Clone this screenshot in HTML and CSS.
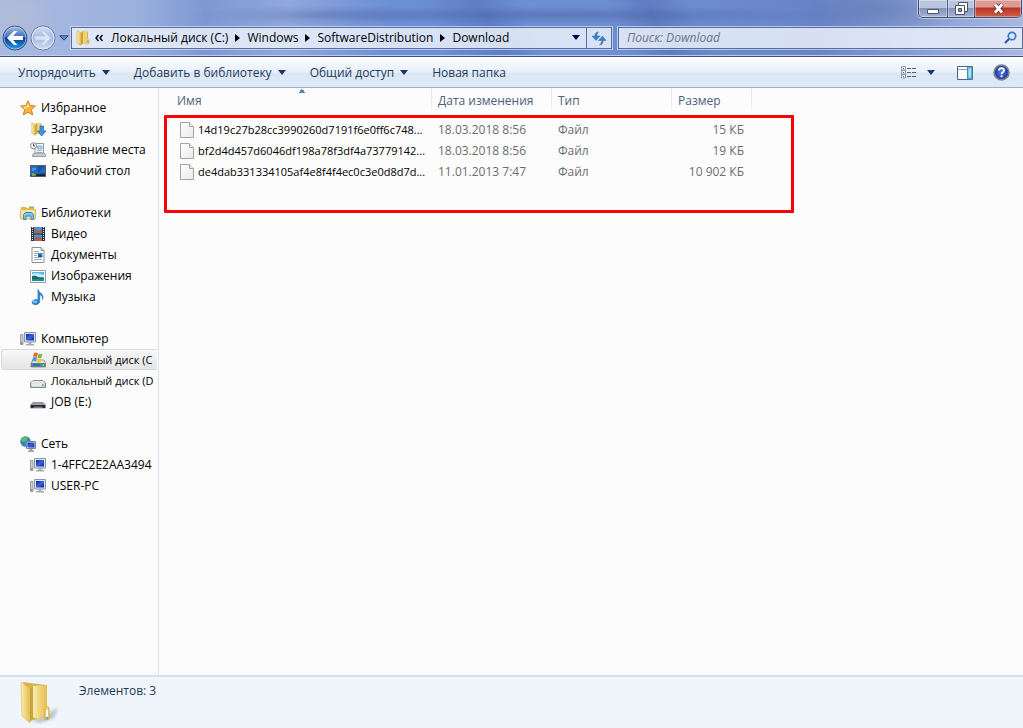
FILE: index.html
```html
<!DOCTYPE html>
<html lang="ru">
<head>
<meta charset="utf-8">
<title>Download</title>
<link rel="stylesheet" href="styles.css">
</head>
<body>
<svg class="defs" aria-hidden="true">
  <defs>
    <linearGradient id="gold" x1="0" x2="1"><stop offset="0" stop-color="#fbeeb0"/><stop offset="1" stop-color="#e5bd50"/></linearGradient>
    <linearGradient id="orb" x1="0" y1="0" x2="0" y2="1"><stop offset="0" stop-color="#a9c3e8"/><stop offset=".45" stop-color="#3f6fbe"/><stop offset=".5" stop-color="#0b3a94"/><stop offset="1" stop-color="#1fa5f0"/></linearGradient>
    <linearGradient id="orb2" x1="0" y1="0" x2="0" y2="1"><stop offset="0" stop-color="#d3ddf2"/><stop offset=".5" stop-color="#a9bbe2"/><stop offset="1" stop-color="#d0dcf3"/></linearGradient>
    <linearGradient id="screen" x1="0" y1="0" x2="1" y2="1"><stop offset="0" stop-color="#0a1fa0"/><stop offset=".5" stop-color="#3a62e0"/><stop offset="1" stop-color="#0c2290"/></linearGradient>
    <linearGradient id="sheet" x1="0" y1="0" x2="1" y2="1"><stop offset="0" stop-color="#ffffff"/><stop offset="1" stop-color="#e9e9e9"/></linearGradient>
    <linearGradient id="metal" x1="0" y1="0" x2="0" y2="1"><stop offset="0" stop-color="#f4f4f4"/><stop offset="1" stop-color="#b4b8bb"/></linearGradient>
    <radialGradient id="help"><stop offset="0" stop-color="#5b8bec"/><stop offset="1" stop-color="#0b2a9a"/></radialGradient>
    <symbol id="pc" viewBox="0 0 16 16">
      <path d="M.5 3.500h2.500v10H.5z" fill="#c9ced3" stroke="#888f96" stroke-width=".8"/><path d="M1 11h1.500v2H1z" fill="#55b848"/>
      <path d="M4.500 1.500h11v9.500h-11z" fill="#dfe3ea" stroke="#8c949f"/><path d="M6 3h8v6.500H6z" fill="url(#screen)"/>
      <path d="M8.500 11h3v2h2.500v1.500H6V13h2.500z" fill="#a5abb2"/>
    </symbol>
    <symbol id="file" viewBox="0 0 14 16">
      <path d="M.5.5h9l4 4v11H.5z" fill="url(#sheet)" stroke="#a3a3a3"/><path d="M9.500.5v4h4" fill="#f2f2f2" stroke="#a3a3a3"/>
    </symbol>
    <symbol id="folder" viewBox="0 0 16 16">
      <path d="M7 1l6 .5V13l-7 1z" fill="#dcb343"/><path d="M8 1l4-.5V13l-4 1z" fill="#efd274"/><path d="M2 .8l4 2V15.200L2 13z" fill="url(#gold)" stroke="#d4af4c" stroke-width=".6"/><path d="M6 2.800l2-1V13l-2 2z" fill="#cda23a"/><path d="M11.500 9.500q2-2 2.500 0v4l-2.500 1z" fill="#f2d878" stroke="#d4ae44" stroke-width=".5"/><path d="M13 10v3" stroke="#5aa6e0"/>
    </symbol>
  </defs>
</svg>
<div class="window">
  <header class="frame">
    <div class="caption">
      <button class="cap" aria-label="Свернуть"><svg width="14" height="7" viewBox="0 0 14 7"><path d="M1.500 1.500h11v4h-11z" fill="#fff" stroke="#4a5468"/></svg></button>
      <button class="cap cap-max" aria-label="Восстановить"><svg width="13" height="13" viewBox="0 0 13 13"><path d="M3.500.5h9v9h-9z" fill="#fff" stroke="#4a5468"/><path d="M.5 3.500h9v9h-9z" fill="#fff" stroke="#4a5468"/><path d="M3.500 6.500h3v3h-3z" fill="#8191b0" stroke="#4a5468"/></svg></button>
      <button class="cap cap-close" aria-label="Закрыть"><svg width="13" height="11" viewBox="0 0 13 11"><path d="M3 1.500l7 8M10 1.500l-7 8" stroke="#5b3540" stroke-width="4.500"/><path d="M3 1.500l7 8M10 1.500l-7 8" stroke="#fff" stroke-width="2.800"/></svg></button>
    </div>
    <div class="navrow">
      <div class="travel">
        <button aria-label="Назад"><svg width="26" height="26" viewBox="0 0 26 26"><circle cx="13" cy="13" r="12" fill="url(#orb)" stroke="#3c4d77"/><circle cx="13" cy="13" r="11" fill="none" stroke="#b5cdf0" stroke-opacity=".7"/><path d="M5 13l7-7h3.500l-4.500 5H21v4H11l4.500 5H12z" fill="#fff"/></svg></button>
        <button aria-label="Вперёд"><svg width="26" height="26" viewBox="0 0 26 26"><circle cx="13" cy="13" r="12" fill="url(#orb2)" stroke="#68799c"/><circle cx="13" cy="13" r="11" fill="none" stroke="#dfe8f8"/><path d="M21 13l-7-7h-3.500l4.500 5H5v4h10l-4.500 5H14z" fill="#d9e3f5" stroke="#b3c2e2" stroke-width=".6"/></svg></button>
        <button aria-label="Журнал"><svg width="10" height="6" viewBox="0 0 10 6"><path d="M.8.800h8.400L5 5.200z" fill="#5292d4" stroke="#2c477c"/></svg></button>
      </div>
      <div class="address">
        <svg class="ic" width="16" height="16"><use href="#folder"/></svg>
        <button class="laquo" aria-label="Предыдущие папки"><svg width="8" height="8" viewBox="0 0 8 8"><path d="M3.500 1L1 4l2.500 3M7.500 1L5 4l2.500 3" fill="none" stroke="#000" stroke-width="1.400"/></svg></button>
        <a href="#">Локальный диск (C:)</a><i class="sep"></i><a href="#">Windows</a><i class="sep"></i><a href="#">SoftwareDistribution</a><i class="sep"></i><a href="#">Download</a>
        <button class="drop" aria-label="Предыдущие расположения"><i class="tri"></i></button>
        <button class="refresh" aria-label="Обновить"><svg width="16" height="16" viewBox="0 0 16 16"><path d="M7.500 2C4.500 2 4 4 4 6H1l4 4.500L9 6H6c0-2 0-3 1.500-4z" fill="#3c7fce" stroke="#2a5ea8" stroke-width=".4"/><path d="M8.500 15c3 0 3.500-2 3.500-4.500h3L11.500 6l-4 4.500h3c0 2.500-.5 3.500-2 4.500z" fill="#3c7fce" stroke="#2a5ea8" stroke-width=".4"/></svg></button>
      </div>
      <label class="search"><input type="text" aria-label="Поиск" placeholder="Поиск: Download"><svg width="13" height="13" viewBox="0 0 13 13"><circle cx="8" cy="5" r="3.700" fill="#d8eafc" stroke="#3777c4" stroke-width="1.700"/><path d="M5 8l-4 4" stroke="#2c5ca5" stroke-width="2.200"/></svg></label>
    </div>
  </header>

  <div class="toolbar">
    <button>Упорядочить<i class="tri"></i></button>
    <button>Добавить в библиотеку<i class="tri"></i></button>
    <button>Общий доступ<i class="tri"></i></button>
    <button>Новая папка</button>
    <div class="tools">
      <button aria-label="Вид"><svg width="16" height="13" viewBox="0 0 16 13"><path d="M.5.5h4v3.500h-4zM.5 4.500h4V8h-4zM.5 8.500h4V12h-4z" fill="#fff" stroke="#8a95a5"/><path d="M2 2h1v1H2zM2 10h1v1H2z" fill="#456"/><path d="M2 6h1v1H2z" fill="#d22"/><path d="M6 2.500h4m1 0h4M6 6.500h4m1 0h4M6 10.500h4m1 0h4" stroke="#4e6384"/></svg></button>
      <button class="viewdrop" aria-label="Дополнительно"><i class="tri"></i></button>
      <button aria-label="Область просмотра"><svg width="16" height="14" viewBox="0 0 16 14"><path d="M.5.5h15v13H.5z" fill="#fff" stroke="#4b6289"/><path d="M1 3.500h9" stroke="#8aa0c4"/><path d="M10.500 1h4.500v12h-4.500z" fill="#75cbe2" stroke="#4f88ac"/><path d="M12 3h2v8h-2z" fill="#a7e6ef"/></svg></button>
      <button aria-label="Справка"><svg width="17" height="17" viewBox="0 0 17 17"><circle cx="8.500" cy="8.500" r="7.400" fill="url(#help)" stroke="#7d828c" stroke-width="1.800"/><path d="M6 6.500c0-3 5-3 5 0 0 1.600-2.300 1.700-2.300 3.500" fill="none" stroke="#fff" stroke-width="1.800"/><circle cx="8.600" cy="12.300" r="1.100" fill="#fff"/></svg></button>
    </div>
  </div>

  <div class="body">
    <nav class="side">
      <section>
        <a class="root" href="#"><svg width="16" height="16" viewBox="0 0 16 16"><path d="M8 .8l2.200 4.800 5.200.4-4 3.600 1.300 5.400L8 12.200 3.300 15l1.300-5.400-4-3.600 5.200-.4z" fill="#fbb33b" stroke="#d97e22"/><path d="M8 3l1.300 3.500L5 9l-2-2.200 3.500-.5z" fill="#fedd8a"/></svg>Избранное</a>
        <a href="#"><svg width="16" height="16" viewBox="0 0 16 16"><use href="#folder" width="14" height="16"/><path d="M10 5h3.500v5H16l-4.300 5L7.500 10H10z" fill="#3b96e4" stroke="#1e64ac" stroke-width=".7"/></svg>Загрузки</a>
        <a href="#"><svg width="16" height="16" viewBox="0 0 16 16"><path d="M5 1.500h8.500V12H5z" fill="#f5f8fb" stroke="#8d99a3"/><path d="M7.500 4h4.500v3H7.500zM7 8.500h5M7 10.500h5" fill="#a7d4f0" stroke="#7ba9c8" stroke-width=".8"/><path d="M3 12l2-1h9l1.500 1.500v2h-13z" fill="#c7ccd0" stroke="#868d92" stroke-width=".8"/><circle cx="3.500" cy="3.800" r="3" fill="#f1f4f6" stroke="#848c92"/><path d="M3.500 2v2H5" fill="none" stroke="#556"/></svg>Недавние места</a>
        <a href="#"><svg width="16" height="16" viewBox="0 0 16 16"><path d="M.5 2.500h15v11H.5z" fill="#1b4a8c" stroke="#4d5b70"/><path d="M1 3h14v7L1 11z" fill="#276bc0"/><path d="M7 3h8L8 10z" fill="#1654a8"/><path d="M1 11.500h14V13H1z" fill="#14233a"/><circle cx="3" cy="11.500" r="1.600" fill="#5db85a"/><path d="M4 12h2" stroke="#f4bb35"/><path d="M3 5v3M5 5v2" stroke="#80aeea"/></svg>Рабочий стол</a>
      </section>
      <section>
        <a class="root" href="#"><svg width="16" height="16" viewBox="0 0 16 16"><path d="M1 2h5l1 1h7v11H1z" fill="#e2b850"/><path d="M.5 4.500h15V14H.5z" fill="#f7e4a0" stroke="#dbb95e"/><path d="M3.500 14.500V9.500l2-2h6l2 2v5H11v-3.500H6V14.500z" fill="#7fc2ea" stroke="#3b86bf"/><path d="M9 1.500h5v1.500H9z" fill="#8cba60"/></svg>Библиотеки</a>
        <a href="#"><svg width="16" height="16" viewBox="0 0 16 16"><path d="M1 1h14v14H1z" fill="#273340"/><path d="M4 1h8v14H4z" fill="#4a94d8"/><path d="M4 2l4 3 4-2v3L9 7H6L4 6zM4 15l1-3 3-2 4 3v2z" fill="#b0604a"/><path d="M4 8h8" stroke="#182634"/><path d="M2.500 1v14M13.500 1v14" stroke="#d8e7e4" stroke-dasharray="1 1"/></svg>Видео</a>
        <a href="#"><svg width="16" height="16" viewBox="0 0 16 16"><path d="M2 .5h9l3 3v12H2z" fill="#fff" stroke="#8a9299"/><path d="M11 .5v3h3" fill="#e1e5e9" stroke="#8a9299"/><path d="M4 4.500h5M4 6.500h4M4 8.500h3M4 10.500h8M4 12.500h8" stroke="#9aacb8"/><path d="M8 6h4.500v4H8z" fill="#368acb"/><path d="M8 9l2-2 2.500 3H8z" fill="#195592"/></svg>Документы</a>
        <a href="#"><svg width="16" height="16" viewBox="0 0 16 16"><path d="M.5 2.500h15v12H.5z" fill="#fff" stroke="#929fab"/><path d="M2 4h12v9H2z" fill="#5ab9ef"/><path d="M2 6q4-2 12 1v2H2z" fill="#c5edfa"/><path d="M2 8q4-1 6 1l6 1v1H2z" fill="#216c4b"/><path d="M2 11h12v2H2z" fill="#1e87b2"/></svg>Изображения</a>
        <a href="#"><svg width="16" height="16" viewBox="0 0 16 16"><path d="M8 .5c1 3.500 6.500 4.500 4.500 10 .3-3-1-4.500-2.800-5v7c0 2.500-3 3.500-5.500 3s-3-3.500 0-4.500c1.500-.6 3-.5 3.800 0z" fill="#2c87dc" stroke="#1c65b2" stroke-width=".6"/><ellipse cx="4.800" cy="12.800" rx="2.300" ry="1.300" fill="#7cc0f5"/></svg>Музыка</a>
      </section>
      <section>
        <a class="root" href="#"><svg width="16" height="16"><use href="#pc"/></svg>Компьютер</a>
        <a class="drive current" href="#" title="Локальный диск (C:)"><svg width="16" height="16" viewBox="0 0 16 16"><path d="M1 11l2-3h11l1.500 3v4H1z" fill="url(#metal)" stroke="#777f84" stroke-width=".7"/><path d="M1 11h14.500v4H1z" fill="#62818a"/><path d="M3 12h7v2H3z" fill="#2d76a8"/><path d="M12.500 12H14v2h-1.500z" fill="#6ef052"/><path d="M4 1q2-1 4 .3L7 5Q5 4 3 5z" fill="#ec6533"/><path d="M8.500 1.500q2 1 4 0l-1 4q-2 1-4 0z" fill="#7cb93c"/><path d="M3 5.500q2-1 4 0L6 9.500q-2-1-4 0z" fill="#4897df"/><path d="M7.500 6q2 1 4 0l-1 4q-2 1-4 0z" fill="#fac540"/></svg>Локальный диск (C</a>
        <a class="drive" href="#" title="Локальный диск (D:)"><svg width="16" height="16" viewBox="0 0 16 16"><path d="M.5 10L3 7.500h10l2.500 2.500v4.500H.5z" fill="url(#metal)" stroke="#858b8f"/><path d="M2 10.500h12v3H2z" fill="#e9eced"/><path d="M12 11h1.500v2H12z" fill="#4dcb3b"/></svg>Локальный диск (D</a>
        <a href="#"><svg width="16" height="16" viewBox="0 0 16 16"><path d="M.5 11L3 8.500h10l2.500 2.500v3H.5z" fill="#9ca0a4" stroke="#73777b" stroke-width=".7"/><path d="M1 11h14v3H1z" fill="#292c31"/><path d="M3 14l1.500-1.500h7L13 14z" fill="#777d83"/></svg>JOB (E:)</a>
      </section>
      <section>
        <a class="root" href="#"><svg width="16" height="16" viewBox="0 0 16 16"><circle cx="5.500" cy="5.500" r="5.200" fill="#2c83cb"/><path d="M2 2q4-3 6 0L6 5 3 6 1 4zM5 7l4 0-2 3.500z" fill="#61bf59"/><path d="M6.500 5.500h9v7h-9z" fill="#dce2eb" stroke="#7c8698"/><path d="M7.500 6.500h7v5h-7z" fill="url(#screen)"/><path d="M9.500 13h3v1.500H14V16H8v-1.500h1.500z" fill="#9aa3ad"/></svg>Сеть</a>
        <a href="#"><svg width="16" height="16"><use href="#pc"/></svg>1-4FFC2E2AA3494</a>
        <a href="#"><svg width="16" height="16"><use href="#pc"/></svg>USER-PC</a>
      </section>
    </nav>
    <main class="content">
      <table>
        <colgroup><col class="c-name"><col class="c-mid"><col class="c-mid"><col class="c-size"></colgroup>
        <thead><tr><th class="sorted"><button>Имя</button></th><th><button>Дата изменения</button></th><th><button>Тип</button></th><th><button>Размер</button></th></tr></thead>
        <tbody>
          <tr><td><span class="name"><svg width="14" height="16"><use href="#file"/></svg>14d19c27b28cc3990260d7191f6e0ff6c748...</span></td><td>18.03.2018 8:56</td><td>Файл</td><td>15 КБ</td></tr>
          <tr><td><span class="name"><svg width="14" height="16"><use href="#file"/></svg>bf2d4d457d6046df198a78f3df4a73779142...</span></td><td>18.03.2018 8:56</td><td>Файл</td><td>19 КБ</td></tr>
          <tr><td><span class="name"><svg width="14" height="16"><use href="#file"/></svg>de4dab331334105af4e8f4f4ec0c3e0d8d7d...</span></td><td>11.01.2013 7:47</td><td>Файл</td><td>10 902 КБ</td></tr>
        </tbody>
      </table>
      <div class="marker"></div>
    </main>
  </div>

  <footer class="details">
    <svg width="40" height="44" viewBox="0 0 40 44"><defs><filter id="soft"><feGaussianBlur stdDeviation="1.500"/></filter></defs><path d="M12 40l26-13-4 10-14 5z" fill="#9da5b4" opacity=".6" filter="url(#soft)"/><path d="M3 1l23 3v32l-16 4z" fill="#d5b450"/><path d="M13 5l14-1v31l-9 3-6-2z" fill="url(#gold)"/><path d="M1 1l9 7v34l-8-7z" fill="url(#gold)" stroke="#e0c468" stroke-width=".7"/><path d="M10 8l3-2v31l-3 4z" fill="#c6a441"/><path d="M25 28q3-4 4-1v11l-4 1z" fill="#f2d878" stroke="#d4ae44"/><path d="M27 29v7" stroke="#fff" stroke-width="2"/><path d="M27 36v2" stroke="#5aa6e0" stroke-width="2"/></svg>
    <p>Элементов: 3</p>
  </footer>
</div>
</body>
</html>
```
FILE: styles.css
```css
* { box-sizing: border-box; }
body { margin: 0; font: 12px/16px "Open Sans", "Noto Sans", sans-serif; color: #000; }
button { font: inherit; color: inherit; background: none; border: 0; padding: 0; display: flex; align-items: center; }
a { color: inherit; text-decoration: none; }
svg { flex: none; display: block; }
.defs { position: absolute; width: 0; height: 0; }
.window { min-height: 100vh; display: flex; flex-direction: column; background: #fcfcfc; }

.frame {
  position: relative;
  padding: 25px 0 6px;
  border-bottom: 1px solid #3f5078;
  background:
    radial-gradient(ellipse 40px 26px at 16px 16px, rgba(190, 190, 205, .5), transparent),
    radial-gradient(ellipse 140px 10px at 330px 15px, rgba(70, 90, 150, .3), transparent),
    radial-gradient(ellipse 300px 9px at 560px 15px, rgba(60, 80, 140, .35), transparent),
    radial-gradient(ellipse 90px 24px at 880px 10px, rgba(70, 95, 150, .3), transparent),
    linear-gradient(65deg, transparent 42%, rgba(50, 75, 150, .25) 48%, transparent 52%, transparent 60%, rgba(50, 75, 150, .25) 64%, transparent 68%),
    linear-gradient(90deg, #a9bae0 0, #9cb1de 13%, #7d98d4 20%, #90a8dc 28%, #6d8fd6 38%, #6e8ed2 60%, #6985c8 80%, #9caedb 96%, #a8b8df);
  box-shadow: inset 0 -1px #b9cdf1;
}
.caption {
  position: absolute; top: 0; right: 1px; display: flex; height: 18px;
  border: 1px solid #414e70; border-top: 0; border-radius: 0 0 5px 5px; overflow: hidden;
  box-shadow: 0 0 0 1px rgba(220, 230, 250, .6);
}
.cap { width: 28px; justify-content: center; background: linear-gradient(#b9c5df 45%, #8294bb 50%, #a5b5d6); box-shadow: inset 0 0 0 1px rgba(255, 255, 255, .35); }
.cap:first-child { padding-top: 5px; }
.cap-max { width: 27px; border-left: 1px solid #4c5a7c; }
.cap-close { width: 47px; border-left: 1px solid #4c5a7c; background: linear-gradient(#dc9c94 40%, #b93324 48%, #d0604a); }

.navrow { display: flex; align-items: center; height: 25px; }
.travel { display: flex; align-items: center; gap: 2px; width: 71px; padding-left: 2px; }
.travel button:last-child { margin-left: 1px; }
.address, .search {
  display: flex; align-items: center; height: 22px; min-width: 0;
  border: 1px solid #5b6e9b; background: rgba(236, 242, 252, .84); box-shadow: 0 0 0 1px rgba(210, 222, 246, .75);
}
.address { flex: 0 0 541px; padding-left: 3px; white-space: nowrap; }
.laquo { margin: 0 8px 0 4px; }
.sep { border: 4px solid transparent; border-left: 5px solid #000; border-right: 0; margin: 0 7px; }
.tri { border: 4px solid transparent; border-top: 5px solid #1e395b; border-bottom: 0; }
.drop { margin-left: auto; padding: 0 6px; }
.drop .tri { border-top-color: #000060; }
.refresh { align-self: stretch; width: 25px; justify-content: center; border-left: 1px solid #5b6e9b; }
.search { flex: 1; margin-left: 6px; padding: 0 5px 0 8px; }
.search input { flex: 1; min-width: 0; font: italic 12px/16px "Open Sans", sans-serif; border: 0; padding: 0; background: none; outline: 0; }
.search input::placeholder { color: #70757f; opacity: 1; }

.toolbar {
  display: flex; align-items: center; height: 31px; padding: 0 13px 0 18px; gap: 24px; color: #1e395b;
  border-top: 1px solid #fff; border-bottom: 1px solid #a0afc8;
  background: linear-gradient(#fafcff, #e8f0fa 48%, #dce6f4 52%, #dee9f8);
}
.toolbar .tri { margin-left: 6px; }
.tools { display: flex; align-items: center; margin-left: auto; gap: 20px; }
.tools .viewdrop { margin: 0 2px 0 -16px; }

.body { flex: 1; display: flex; }
.side { flex: 0 0 159px; padding: 9px 0; border-right: 1px solid #d6e5f5; }
.side section { margin-bottom: 21px; }
.side a { display: flex; align-items: center; gap: 5px; height: 21px; padding-left: 29px; margin: 0 1px; white-space: nowrap; }
.side a.root { padding-left: 19px; }
.side a.drive { font-size: 11px; }
.side a.current { border: 1px solid #d9d9d9; border-right: 0; border-radius: 3px 0 0 3px; padding-left: 28px; background: linear-gradient(#f8f8f8, #e5e5e5); }

.content { flex: 1; position: relative; padding-left: 12px; }
table { table-layout: fixed; width: 581px; border-collapse: collapse; }
.c-name { width: 261px; }
.c-mid { width: 120px; }
.c-size { width: 80px; }
th { height: 31px; padding: 0 0 5px 6px; color: #4c607a; font-weight: 400; text-align: left; background: linear-gradient(#dde7f3, #e8eef6 70%, #fcfcfc) right top / 1px 24px no-repeat; }
th.sorted { background: linear-gradient(#dde7f3, #e8eef6 70%, #fcfcfc) right top / 1px 24px no-repeat, conic-gradient(from 135deg at 50% 0, #5a86b4 90deg, transparent 0) center 1px / 8px 4px no-repeat; }
td { height: 21px; padding: 0 0 0 6px; color: #6d6d6d; white-space: nowrap; }
td:first-child { padding-left: 9px; color: #000; font-size: 11px; }
td:last-child { padding: 0 8px 0 0; text-align: right; }
.name { display: flex; align-items: center; gap: 4px; }
.marker { position: absolute; left: 5px; top: 27px; width: 630px; height: 98px; border: 3px solid #f00; border-radius: 1px; }

.details { display: flex; gap: 19px; height: 53px; padding: 4px 0 0 20px; border-top: 2px solid #d3e0f1; background: #f0f4fb; color: #1e395b; }
.details p { margin: 2px 0; }
```
